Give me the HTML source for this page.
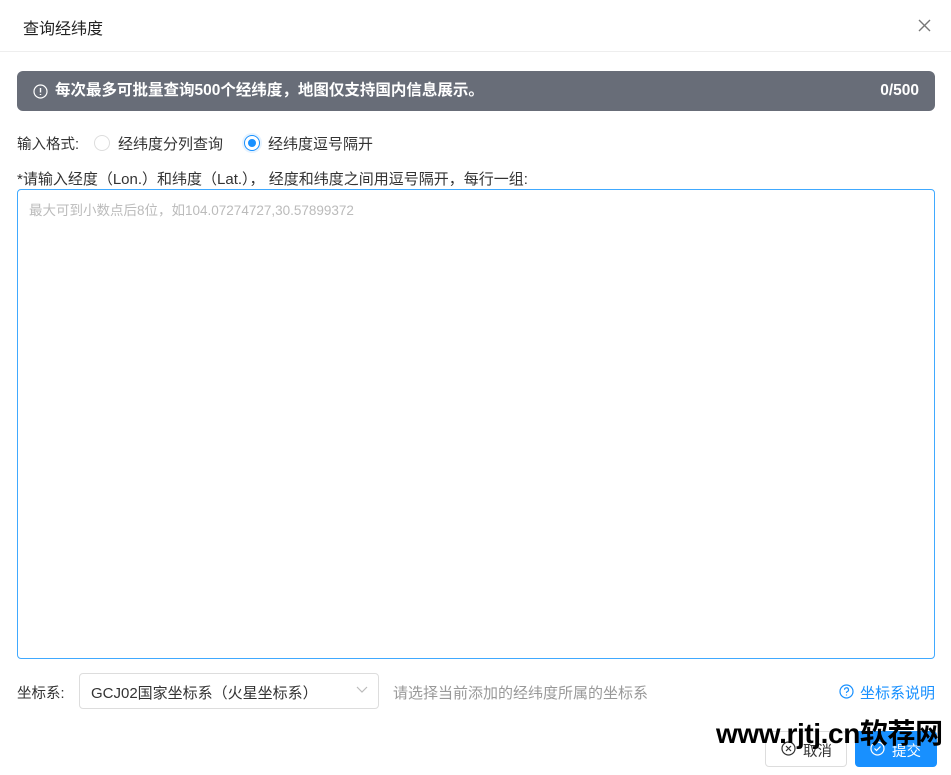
<!DOCTYPE html>
<html><head><meta charset="utf-8"><style>
*{box-sizing:border-box;margin:0;padding:0}
body{width:951px;height:775px;background:#fff;font-family:"Liberation Sans","Noto Sans CJK SC",sans-serif;font-size:14.5px;color:#333;position:relative;overflow:hidden}
.a{position:absolute;white-space:nowrap}
</style></head><body>
<div class="a" style="left:23px;top:15px;font-size:16px;color:#222">查询经纬度</div>
<svg class="a" style="left:918px;top:19px" width="13" height="13" viewBox="0 0 13 13"><path d="M1 1L12 12M12 1L1 12" stroke="#777" stroke-width="1.4"/></svg>
<div class="a" style="left:0;top:51px;width:951px;height:1px;background:#eee"></div>
<div class="a" style="left:17px;top:71px;width:918px;height:40px;background:#686d78;border-radius:6px;color:#fff;font-weight:bold;font-size:15.5px;line-height:40px">
<svg class="a" style="left:16px;top:13px" width="15" height="15" viewBox="0 0 15 15"><circle cx="7.5" cy="7.5" r="6.5" fill="none" stroke="#fff" stroke-width="1.2"/><path d="M7.5 4v4.5M7.5 10v1" stroke="#fff" stroke-width="1.4"/></svg>
<span class="a" style="left:38px">每次最多可批量查询500个经纬度，地图仅支持国内信息展示。</span>
<span class="a" style="right:16px">0/500</span></div>
<div class="a" style="left:17px;top:133px">输入格式:</div>
<div class="a" style="left:94px;top:135px;width:16px;height:16px;border:1px solid #ddd;border-radius:50%"></div>
<div class="a" style="left:118px;top:133px;font-size:15px">经纬度分列查询</div>
<div class="a" style="left:244px;top:135px;width:16px;height:16px;border:1px solid #1890ff;border-radius:50%;box-shadow:0 0 0 2px #e6f3ff"><div style="margin:3px;width:8px;height:8px;border-radius:50%;background:#1890ff"></div></div>
<div class="a" style="left:268px;top:133px;font-size:15px">经纬度逗号隔开</div>
<div class="a" style="left:17px;top:168px;font-size:15px">*请输入经度（Lon.）和纬度（Lat.）， 经度和纬度之间用逗号隔开，每行一组:</div>
<div class="a" style="left:17px;top:189px;width:918px;height:470px;border:1px solid #40a9ff;border-radius:4px"></div>
<div class="a" style="left:29px;top:199px;color:#bbb;font-size:13.5px">最大可到小数点后8位，如104.07274727,30.57899372</div>
<div class="a" style="left:17px;top:682px">坐标系:</div>
<div class="a" style="left:79px;top:673px;width:300px;height:36px;border:1px solid #ddd;border-radius:4px"></div>
<div class="a" style="left:91px;top:682px;font-size:15px">GCJ02国家坐标系（火星坐标系）</div>
<svg class="a" style="left:356px;top:686px" width="12" height="8" viewBox="0 0 12 8"><path d="M1 1l5 5 5-5" fill="none" stroke="#bbb" stroke-width="1.2"/></svg>
<div class="a" style="left:393px;top:682px;color:#999;font-size:15px">请选择当前添加的经纬度所属的坐标系</div>
<svg class="a" style="left:839px;top:684px" width="15" height="15" viewBox="0 0 15 15"><circle cx="7.5" cy="7.5" r="6.5" fill="none" stroke="#1890ff" stroke-width="1.2"/><path d="M5.5 5.8a2 2 0 1 1 2.6 1.9c-.5.2-.6.6-.6 1.3M7.5 10.5v1" fill="none" stroke="#1890ff" stroke-width="1.2"/></svg>
<div class="a" style="left:860px;top:682px;color:#1890ff;font-size:15px">坐标系说明</div>
<div class="a" style="left:765px;top:731px;width:82px;height:36px;border:1px solid #ddd;border-radius:4px"></div>
<svg class="a" style="left:781px;top:741px" width="15" height="15" viewBox="0 0 15 15"><circle cx="7.5" cy="7.5" r="6.5" fill="none" stroke="#333" stroke-width="1.2"/><path d="M5 5l5 5M10 5l-5 5" stroke="#333" stroke-width="1.2"/></svg>
<div class="a" style="left:803px;top:740px">取消</div>
<div class="a" style="left:855px;top:731px;width:82px;height:36px;background:#1890ff;border-radius:4px"></div>
<svg class="a" style="left:870px;top:741px" width="15" height="15" viewBox="0 0 15 15"><circle cx="7.5" cy="7.5" r="6.5" fill="none" stroke="#fff" stroke-width="1.2"/><path d="M4.5 7.5l2 2 4-4" fill="none" stroke="#fff" stroke-width="1.2"/></svg>
<div class="a" style="left:892px;top:740px;color:#fff">提交</div>
<div class="a" style="left:716px;top:712px;font-size:28px;font-weight:bold;color:#000;letter-spacing:-0.4px">www.rjtj.cn软荐网</div>
</body></html>
